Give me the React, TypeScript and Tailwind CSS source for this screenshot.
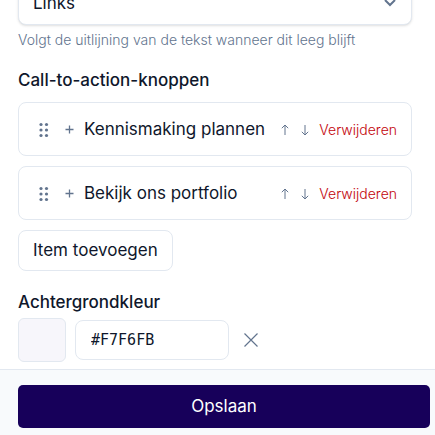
import { useState } from "react";

const initialItems = ["Kennismaking plannen", "Bekijk ons portfolio"];

function GripIcon() {
  return (
    <svg width="10" height="16" viewBox="0 0 10 16" fill="currentColor" aria-hidden="true">
      {[2.5, 8, 13.5].map((y) => (
        <g key={y}>
          <circle cx="2" cy={y} r="1.6" />
          <circle cx="7.5" cy={y} r="1.6" />
        </g>
      ))}
    </svg>
  );
}

function ArrowIcon({ down = false }: { down?: boolean }) {
  return (
    <svg width="8" height="12" viewBox="0 0 8 12" fill="none" stroke="currentColor" aria-hidden="true">
      <path d={down ? "M4 1V11M0.8 7.8L4 11L7.2 7.8" : "M4 11V1M0.8 4.2L4 1L7.2 4.2"} />
    </svg>
  );
}

function ItemRow({ title, onRemove }: { title: string; onRemove: () => void }) {
  return (
    <li className="flex h-[54px] items-center rounded-lg border border-slate-200 bg-white pt-px pr-[14px] pl-5">
      <button type="button" aria-label="Verslepen" className="text-slate-500">
        <GripIcon />
      </button>
      <button type="button" aria-label="Uitklappen" className="ml-4 text-slate-500">
        <svg width="9" height="9" viewBox="0 0 9 9" fill="none" stroke="currentColor" strokeWidth="1.3" aria-hidden="true">
          <path d="M4.5 0.5V8.5M0.5 4.5H8.5" />
        </svg>
      </button>
      <span className="ml-[10px] flex-1 truncate text-[17px]">{title}</span>
      <button type="button" aria-label="Omhoog" className="text-slate-500">
        <ArrowIcon />
      </button>
      <button type="button" aria-label="Omlaag" className="ml-3 text-slate-500">
        <ArrowIcon down />
      </button>
      <button type="button" onClick={onRemove} className="ml-[10px] text-[14px] leading-5 font-light text-red-700">
        Verwijderen
      </button>
    </li>
  );
}

export default function App() {
  const [items, setItems] = useState(initialItems);
  const [color, setColor] = useState("#F7F6FB");

  return (
    <div className="flex h-screen flex-col overflow-hidden bg-white font-['Inter',sans-serif] text-slate-900">
      <main className="flex-1 overflow-hidden pr-[23px] pl-[18px]">
        <div className="relative -mt-[18px]">
          <select
            aria-label="Uitlijning"
            className="block h-[43px] w-full appearance-none rounded-lg border border-slate-200 bg-white px-[14px] text-[17px] shadow-sm"
          >
            <option>Links</option>
            <option>Midden</option>
            <option>Rechts</option>
          </select>
          <svg
            className="pointer-events-none absolute top-[13px] right-4 text-slate-500"
            width="12"
            height="16"
            viewBox="0 0 12 16"
            fill="none"
            stroke="currentColor"
            strokeWidth="2"
            aria-hidden="true"
          >
            <path d="M1 5L6 10L11 5" />
          </svg>
        </div>
        <p className="mt-[3px] text-[14px] leading-6 font-light text-slate-500">
          Volgt de uitlijning van de tekst wanneer dit leeg blijft
        </p>

        <h2 className="mt-4 text-[17px] leading-6 font-medium">Call-to-action-knoppen</h2>
        <ul className="mt-[10px] flex flex-col gap-[10px]">
          {items.map((title, i) => (
            <ItemRow key={i} title={title} onRemove={() => setItems(items.filter((_, j) => j !== i))} />
          ))}
        </ul>
        <button
          type="button"
          onClick={() => setItems([...items, "Nieuwe knop"])}
          className="mt-[10px] h-[41px] rounded-lg border border-slate-200 px-[14px] text-[17px]"
        >
          Item toevoegen
        </button>

        <label htmlFor="background" className="mt-[19px] block text-[17px] leading-6 font-medium">
          Achtergrondkleur
        </label>
        <div className="mt-1 flex items-center">
          <button
            type="button"
            aria-label="Kleur kiezen"
            className="h-11 w-12 rounded-md border border-slate-200"
            style={{ backgroundColor: color }}
          />
          <input
            id="background"
            value={color}
            onChange={(e) => setColor(e.target.value)}
            className="ml-[9px] h-10 w-[154px] rounded-lg border border-slate-200 px-[15px] font-['DejaVu_Sans_Mono',monospace] text-[15px]"
          />
          <button type="button" aria-label="Wissen" onClick={() => setColor("")} className="ml-[15px] text-slate-500">
            <svg width="14" height="14" viewBox="0 0 14 14" fill="none" stroke="currentColor" strokeWidth="1.2" aria-hidden="true">
              <path d="M0.5 0.5L13.5 13.5M13.5 0.5L0.5 13.5" />
            </svg>
          </button>
        </div>
      </main>

      <footer className="border-t border-slate-200 bg-slate-50 pt-[15px] pr-[5px] pb-[7px] pl-[18px]">
        <button type="button" className="h-[43px] w-full rounded-[5px] bg-[#17005a] text-[17px] text-white">
          Opslaan
        </button>
      </footer>
    </div>
  );
}
